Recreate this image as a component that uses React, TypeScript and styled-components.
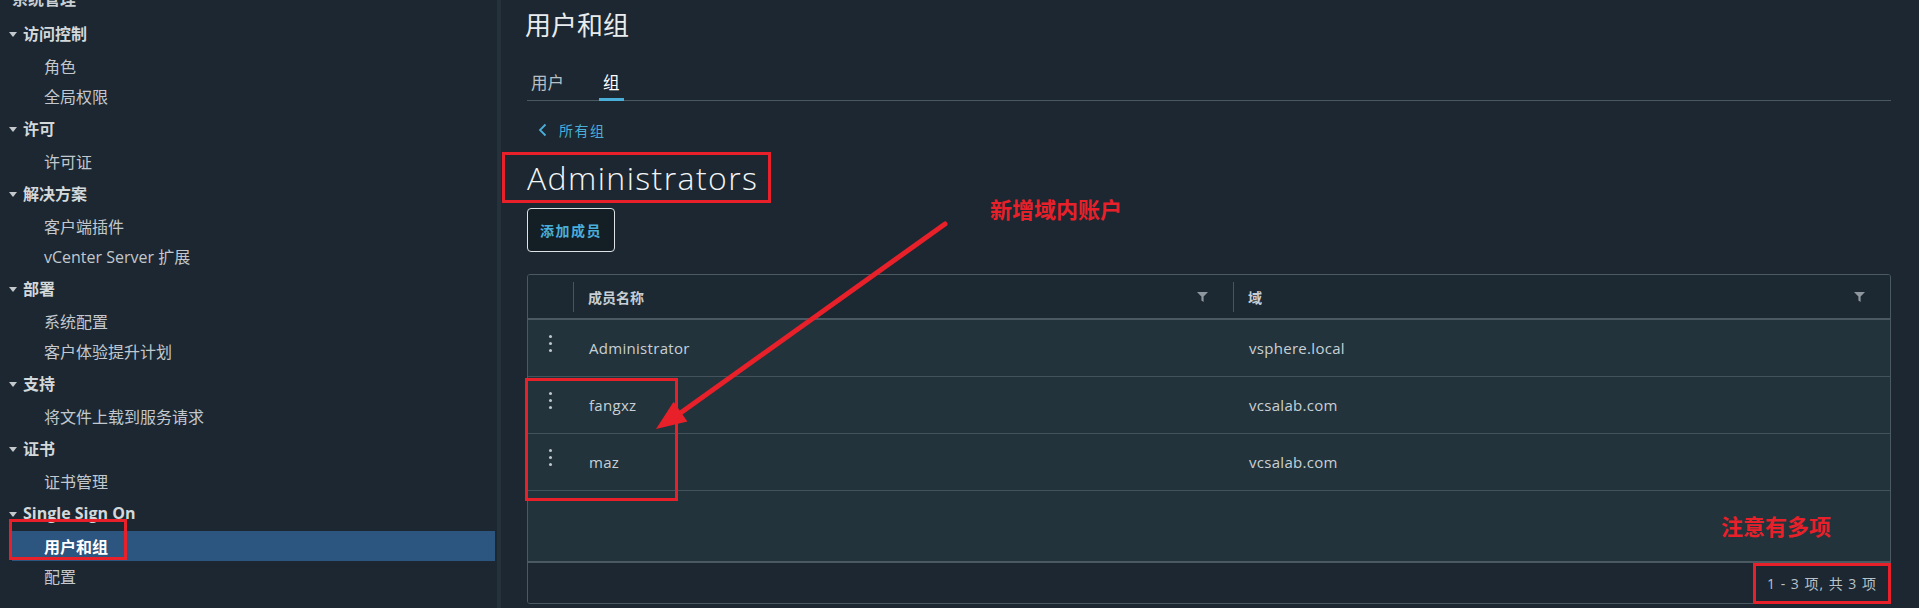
import React from "react";
import styled, { createGlobalStyle } from "styled-components";

const FONT = `"Open Sans", "Noto Sans CJK SC", "Noto Sans", sans-serif`;
const RED = "#e8202a";
const BLUE = "#49afd9";

const GlobalStyle = createGlobalStyle`
  html, body { margin: 0; padding: 0; background: #1c2731; overflow: hidden; }
  body { font-family: ${FONT}; }
  * { box-sizing: border-box; }
`;

const Page = styled.div`
  position: relative;
  display: flex;
  width: 1919px;
  height: 608px;
  overflow: hidden;
  background: #1c2731;
  font-family: ${FONT};
`;

/* ---------- Sidebar ---------- */
const Sidebar = styled.nav`
  width: 497px;
  flex: none;
  overflow: hidden;
`;

const NavList = styled.ul`
  list-style: none;
  margin: -19px 0 0;
  padding: 0;
`;

const SectionTitle = styled.li`
  height: 35px;
  padding: 0 0 1px 12px;
  display: flex;
  align-items: center;
  font-size: 16px;
  font-weight: 700;
  color: #c9cfd3;
`;

const GroupHeader = styled.li`
  height: 35px;
  padding: 0 0 1px 9px;
  display: flex;
  align-items: center;
  gap: 6px;
  font-size: 16px;
  font-weight: 700;
  color: #d3d8db;
`;

const Caret = styled.span`
  width: 0;
  height: 0;
  border-left: 4px solid transparent;
  border-right: 4px solid transparent;
  border-top: 5px solid #c3c9cd;
  margin-top: 3px;
`;

const NavItem = styled.li<{ $active?: boolean }>`
  height: 30px;
  margin: 0 2px 0 12px;
  padding-left: 32px;
  display: flex;
  align-items: center;
  font-size: 16px;
  font-weight: ${(p) => (p.$active ? 700 : 400)};
  color: ${(p) => (p.$active ? "#ffffff" : "#c2c8cd")};
  background: ${(p) => (p.$active ? "#2c5580" : "transparent")};
`;

const Divider = styled.div`
  width: 4px;
  flex: none;
  background: #25313b;
`;

/* ---------- Main ---------- */
const Main = styled.main`
  flex: 1;
  min-width: 0;
  padding: 10px 28px 0 26px;
  display: flex;
  flex-direction: column;
  align-items: flex-start;
`;

const PageTitle = styled.h1`
  margin: 0 0 0 -2px;
  height: 30px;
  line-height: 30px;
  font-size: 26px;
  font-weight: 400;
  color: #e8ecef;
`;

const TabBar = styled.div`
  align-self: stretch;
  margin-top: 25px;
  height: 36px;
  display: flex;
  gap: 31px;
  border-bottom: 1px solid #4a5862;
`;

const Tab = styled.div<{ $active?: boolean }>`
  height: 36px;
  padding: 0 4px;
  display: flex;
  align-items: center;
  border-bottom: 3px solid ${(p) => (p.$active ? BLUE : "transparent")};
  font-size: 16.5px;
  color: ${(p) => (p.$active ? "#ffffff" : "#b6c0c6")};
`;

const BackLink = styled.a`
  margin-top: 19px;
  height: 20px;
  padding-left: 11px;
  display: flex;
  align-items: center;
  gap: 11px;
  font-size: 14px;
  letter-spacing: 1.5px;
  color: ${BLUE};
  text-decoration: none;
`;

const GroupHeading = styled.h2`
  margin: 18px 0 0;
  height: 40px;
  line-height: 40px;
  font-size: 32px;
  font-weight: 300;
  letter-spacing: 1.4px;
  color: #f2f4f6;
`;

const OutlineButton = styled.button`
  margin-top: 10px;
  height: 44px;
  padding: 0 12px;
  border: 1.5px solid #dfe3e6;
  border-radius: 4px;
  background: #141e25;
  color: ${BLUE};
  font-family: ${FONT};
  font-size: 14px;
  font-weight: 700;
  letter-spacing: 1.5px;
`;

/* ---------- Table ---------- */
const Table = styled.div`
  margin-top: 22px;
  align-self: stretch;
  height: 330px;
  border: 1px solid #4b5963;
  border-radius: 3px;
  overflow: hidden;
  display: flex;
  flex-direction: column;
`;

const HeaderRow = styled.div`
  height: 45px;
  flex: none;
  display: grid;
  grid-template-columns: 45px 660px 1fr;
  background: #1c2832;
  border-bottom: 2px solid #4b5963;
`;

const HeaderCell = styled.div`
  display: flex;
  align-items: center;
  padding-right: 25px;
`;

const ColSeparator = styled.span`
  width: 1px;
  height: 30px;
  background: #47555e;
`;

const HeaderLabel = styled.span`
  margin-left: 14px;
  font-size: 14px;
  font-weight: 700;
  color: #c8cfd4;
`;

const FilterIcon = styled.svg`
  margin-left: auto;
  width: 11px;
  height: 10px;
`;

const Body = styled.div`
  flex: 1;
  background: #22333c;
`;

const Row = styled.div`
  height: 57px;
  display: grid;
  grid-template-columns: 45px 660px 1fr;
  border-bottom: 1px solid #44525b;
`;

const DotsCell = styled.div`
  display: flex;
  flex-direction: column;
  align-items: center;
  padding-top: 15px;
  gap: 4px;
`;

const Dot = styled.span`
  width: 3px;
  height: 3px;
  border-radius: 50%;
  background: #c0c7cc;
`;

const TextCell = styled.div`
  display: flex;
  align-items: center;
  padding-left: 16px;
  font-size: 15px;
  letter-spacing: 0.3px;
  color: #c9d0d5;
`;

const Footer = styled.div`
  height: 42px;
  flex: none;
  background: #1c2731;
  border-top: 2px solid #4b5963;
  display: flex;
  justify-content: flex-end;
  align-items: center;
  padding-right: 13px;
  font-size: 14px;
  letter-spacing: 1px;
  color: #b9c2c7;
`;

/* ---------- Annotations (overlay) ---------- */
const AnnoBox = styled.div<{ $x: number; $y: number; $w: number; $h: number }>`
  position: absolute;
  left: ${(p) => p.$x}px;
  top: ${(p) => p.$y}px;
  width: ${(p) => p.$w}px;
  height: ${(p) => p.$h}px;
  border: 3px solid ${RED};
  pointer-events: none;
`;

const AnnoText = styled.div<{ $x: number; $y: number }>`
  position: absolute;
  left: ${(p) => p.$x}px;
  top: ${(p) => p.$y}px;
  font-family: "Noto Sans CJK SC", sans-serif;
  font-size: 22px;
  line-height: 22px;
  font-weight: 700;
  color: ${RED};
  white-space: nowrap;
`;

const ArrowLayer = styled.svg`
  position: absolute;
  left: 0;
  top: 0;
  width: 1919px;
  height: 608px;
  pointer-events: none;
`;

const Filter = () => (
  <FilterIcon viewBox="0 0 11 10">
    <path d="M0 0 H11 L6.6 4.6 V10 L4.4 8.6 V4.6 Z" fill="#8e979d" />
  </FilterIcon>
);

const members = [
  { name: "Administrator", domain: "vsphere.local" },
  { name: "fangxz", domain: "vcsalab.com" },
  { name: "maz", domain: "vcsalab.com" },
];

type Group = { title: string; items: string[] };
const groups: Group[] = [
  { title: "访问控制", items: ["角色", "全局权限"] },
  { title: "许可", items: ["许可证"] },
  { title: "解决方案", items: ["客户端插件", "vCenter Server 扩展"] },
  { title: "部署", items: ["系统配置", "客户体验提升计划"] },
  { title: "支持", items: ["将文件上载到服务请求"] },
  { title: "证书", items: ["证书管理"] },
  { title: "Single Sign On", items: ["用户和组", "配置"] },
];

export default function App() {
  return (
    <Page>
      <GlobalStyle />
      <Sidebar>
        <NavList>
          <SectionTitle>系统管理</SectionTitle>
          {groups.map((g) => (
            <React.Fragment key={g.title}>
              <GroupHeader>
                <Caret />
                {g.title}
              </GroupHeader>
              {g.items.map((it) => (
                <NavItem key={it} $active={it === "用户和组"}>
                  {it}
                </NavItem>
              ))}
            </React.Fragment>
          ))}
        </NavList>
      </Sidebar>
      <Divider />
      <Main>
        <PageTitle>用户和组</PageTitle>
        <TabBar>
          <Tab>用户</Tab>
          <Tab $active>组</Tab>
        </TabBar>
        <BackLink>
          <svg width="10" height="14" viewBox="0 0 10 14">
            <polyline points="7.5,1.5 2,7 7.5,12.5" fill="none" stroke={BLUE} strokeWidth="1.8" />
          </svg>
          所有组
        </BackLink>
        <GroupHeading>Administrators</GroupHeading>
        <OutlineButton>添加成员</OutlineButton>
        <Table>
          <HeaderRow>
            <HeaderCell />
            <HeaderCell>
              <ColSeparator />
              <HeaderLabel>成员名称</HeaderLabel>
              <Filter />
            </HeaderCell>
            <HeaderCell>
              <ColSeparator />
              <HeaderLabel>域</HeaderLabel>
              <Filter />
            </HeaderCell>
          </HeaderRow>
          <Body>
            {members.map((m) => (
              <Row key={m.name}>
                <DotsCell>
                  <Dot />
                  <Dot />
                  <Dot />
                </DotsCell>
                <TextCell>{m.name}</TextCell>
                <TextCell>{m.domain}</TextCell>
              </Row>
            ))}
          </Body>
          <Footer>1 - 3 项, 共 3 项</Footer>
        </Table>
      </Main>

      <AnnoBox $x={502} $y={152} $w={269} $h={51} />
      <AnnoBox $x={525} $y={378} $w={153} $h={123} />
      <AnnoBox $x={9} $y={519} $w={118} $h={41} />
      <AnnoBox $x={1753} $y={563} $w={138} $h={41} />
      <AnnoText $x={990} $y={197}>新增域内账户</AnnoText>
      <AnnoText $x={1721} $y={514}>注意有多项</AnnoText>
      <ArrowLayer viewBox="0 0 1919 608">
        <line x1="945" y1="224" x2="672" y2="419" stroke={RED} strokeWidth="5" strokeLinecap="round" />
        <polygon points="656,429 673.6,401.8 687.4,421.4" fill={RED} />
      </ArrowLayer>
    </Page>
  );
}
